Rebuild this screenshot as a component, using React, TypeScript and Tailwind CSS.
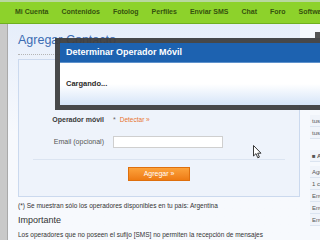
import { ReactNode } from "react";

// nav items along the green bar
const navItems = ["Mi Cuenta", "Contenidos", "Fotolog", "Perfiles", "Enviar SMS", "Chat", "Foro", "Software"];

// sidebar rows (only the first letters show at the right edge)
const sideRows = [
  { t: "tus datos", top: false },
  { t: "tus fotos", top: false },
  { t: "■ Agenda", top: true },
  { t: "Agregar", top: false },
  { t: "1 contacto", top: false },
  { t: "Enviar", top: false },
  { t: "Enviar", top: false },
  { t: "Enviar", top: false },
];

const FormRow = ({ label, bold, children }: { label: string; bold?: boolean; children: ReactNode }) => (
  <div className="flex items-center h-[12px]">
    <div className={`w-[85px] text-right text-[7px] ${bold ? "font-bold text-[#3a3a3a]" : "text-[#555]"}`}>{label}</div>
    <div className="pl-[9px] flex items-center">{children}</div>
  </div>
);

const Cursor = () => (
  <svg className="absolute left-[253px] top-[145px]" width="9" height="14" viewBox="0 0 9 14">
    <path d="M0.5 0.5 L0.5 11 L3 8.6 L4.8 12.8 L6.4 12.1 L4.7 8.2 L8 8.2 Z" fill="#fff" stroke="#222" strokeWidth="0.9" strokeLinejoin="round" />
  </svg>
);

export default function App() {
  return (
    <div className="relative w-[320px] h-[240px] overflow-hidden bg-[#f6f9fd] font-['Liberation_Sans',Arial,sans-serif]">
      {/* Top nav */}
      <nav className="h-[24px] bg-[#8dd22b] border-t-[2px] border-t-[#b9d8a0] border-b border-b-[#6fb020] flex items-center gap-[13px] pl-[15px] whitespace-nowrap">
        {navItems.map((item) => (
          <span key={item} className="text-[7px] font-bold text-[#35520e]">{item}</span>
        ))}
      </nav>

      <div className="flex">
        {/* left gray strip */}
        <div className="w-[8px] h-[216px] bg-[#c9c9c9] border-r border-r-[#a9a9a9]" />

        {/* Main content */}
        <main className="w-[292px] pl-[10px] pt-[7px] bg-gradient-to-b from-[#e6eefa] to-[#f7f9fd] via-[#f7f9fd]">
          <h1 className="text-[12.5px] leading-[18px] text-[#3b6cb3]">Agregar Contacto</h1>
          <div className="mt-[5px] border-b border-dotted border-[#b5b5b5] w-[250px]" />

          <div className="mt-[4px] bg-[#eef3fb] border border-[#cbd9ee] pt-[54px] pb-[15px]">
            <FormRow label="Operador móvil" bold>
              <span className="text-[7px] text-[#666]">*</span>
              <span className="ml-[4px] text-[6.5px] text-[#e8742f]">Detectar »</span>
            </FormRow>
            <div className="h-[10px]" />
            <FormRow label="Email (opcional)">
              <div className="w-[110px] h-[12px] bg-white border border-[#cfcfcf]" />
            </FormRow>
            <div className="mt-[11px] mx-[14px] border-b border-[#dbe4f1]" />
            <div className="mt-[7px] flex justify-center">
              <button className="w-[62px] h-[14px] bg-gradient-to-b from-[#fca23a] to-[#ee7b12] border border-[#de6f0d] text-white text-[7px] leading-[12px]">
                Agregar »
              </button>
            </div>
          </div>

          <p className="mt-[4px] text-[6.5px] leading-[10px] text-[#333] whitespace-nowrap">(*) Se muestran sólo los operadores disponibles en tu país: Argentina</p>
          <h2 className="mt-[3px] text-[9px] leading-[12px] text-[#333]">Importante</h2>
          <p className="mt-[4px] text-[6.5px] leading-[10px] text-[#333] whitespace-nowrap">Los operadores que no poseen el sufijo [SMS] no permiten la recepción de mensajes</p>
        </main>

        {/* right sidebar */}
        <aside className="w-[20px] pl-[10px] pt-[8px]">
          <div className="h-[6px] w-[6px] bg-[#555] ml-[5px]" />
          <div className="mt-[77px] flex flex-col overflow-hidden">
            {sideRows.map((r, i) => (
              <div
                key={i}
                className={`h-[12px] pl-[2px] border-b border-[#dbe4f0] bg-[#f0f4fa] text-[6px] leading-[12px] whitespace-nowrap text-[#555] ${r.top ? "mt-[11px] font-bold text-[#333]" : ""} ${i === 3 ? "mt-[4px]" : ""}`}
              >
                {r.t}
              </div>
            ))}
          </div>
        </aside>
      </div>

      {/* Modal dialog over the page */}
      <div className="absolute left-[55px] top-[38px] w-[275px] border-[5px] border-[#3d3e40]/95">
        <div className="h-[20px] bg-[#1d62b0] border-b border-b-[#5f92cc] pl-[6px] flex items-center">
          <span className="text-[9px] font-bold text-white">Determinar Operador Móvil</span>
        </div>
        <div className="h-[42px] bg-gradient-to-b from-white via-white to-[#d6e5f8] pl-[6px] pt-[6px]">
          <span className="text-[7.5px] font-bold text-[#2a2a2a]">Cargando...</span>
        </div>
      </div>

      <Cursor />
    </div>
  );
}
